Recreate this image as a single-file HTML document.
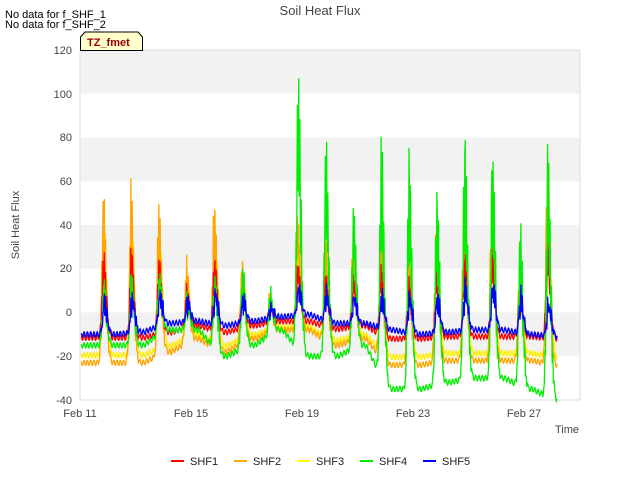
<!DOCTYPE html><html><head><style>body{margin:0;background:#fff;font-family:"Liberation Sans",sans-serif}</style></head><body>
<svg id="s" width="640" height="480" xmlns="http://www.w3.org/2000/svg" font-family="Liberation Sans, sans-serif">
<rect width="640" height="480" fill="#fff"/>
<rect x="80" y="50" width="500" height="350" fill="#fff"/>
<g fill="#f2f2f2"><rect x="80" y="50" width="500" height="43.75"/><rect x="80" y="137.5" width="500" height="43.75"/><rect x="80" y="225" width="500" height="43.75"/><rect x="80" y="312.5" width="500" height="43.75"/></g>
<g stroke="#ddd" stroke-width="1"><line x1="80" y1="50" x2="580" y2="50"/><line x1="80" y1="400" x2="580" y2="400"/><line x1="80" y1="50" x2="80" y2="400"/><line x1="580" y1="50" x2="580" y2="400"/></g>
<g id="d"></g>
<g font-size="11" fill="#444" text-anchor="end">
<text x="72" y="54">120</text><text x="72" y="98">100</text><text x="72" y="141">80</text><text x="72" y="185">60</text><text x="72" y="229">40</text><text x="72" y="272">20</text><text x="72" y="316">0</text><text x="72" y="360">-20</text><text x="72" y="404">-40</text></g>
<g font-size="11" fill="#444" text-anchor="middle">
<text x="80" y="417">Feb 11</text><text x="191" y="417">Feb 15</text><text x="302" y="417">Feb 19</text><text x="413" y="417">Feb 23</text><text x="524" y="417">Feb 27</text></g>
<text x="579" y="433" font-size="11" fill="#444" text-anchor="end">Time</text>
<text x="19" y="225" font-size="11" fill="#444" text-anchor="middle" transform="rotate(-90 19 225)">Soil Heat Flux</text>
<text x="320" y="15" font-size="13" fill="#444" text-anchor="middle">Soil Heat Flux</text>
<text x="5" y="18" font-size="11" fill="#000">No data for f_SHF_1</text>
<text x="5" y="28" font-size="11" fill="#000">No data for f_SHF_2</text>
<path d="M80.5 50.5 V37 L85 32 H138 L142.5 37 V50.5 Z" fill="#ffffcc" stroke="#000" stroke-width="1"/>
<text x="87" y="46" font-size="11" font-weight="bold" fill="#990000">TZ_fmet</text>
<g font-size="11" fill="#222">
<line x1="171" y1="461" x2="184" y2="461" stroke="#f00" stroke-width="2"/><text x="190" y="465">SHF1</text>
<line x1="234" y1="461" x2="247" y2="461" stroke="#fa0" stroke-width="2"/><text x="253" y="465">SHF2</text>
<line x1="297" y1="461" x2="310" y2="461" stroke="#ff0" stroke-width="2"/><text x="316" y="465">SHF3</text>
<line x1="360" y1="461" x2="373" y2="461" stroke="#0e0" stroke-width="2"/><text x="379" y="465">SHF4</text>
<line x1="423" y1="461" x2="436" y2="461" stroke="#00f" stroke-width="2"/><text x="442" y="465">SHF5</text></g>
</svg>
<script>
var P4=[15,18,20,8,20,23,11,113,79,50,83,79,63,88,80,42,78,0];
var N4=[-15,-15,-15,-8,-8,-20,-15,-8,-20,-20,-15,-35,-35,-32,-30,-30,-35,-40];
var P2=[56,59,53,25,56,27,10,47,35,35,45,35,45,60,65,25,70,0];
var N2=[-23,-23,-23,-18,-12,-18,-12,-8,-8,-15,-12,-24,-24,-22,-22,-22,-22,-24];
var P5=[8,10,11,7,12,8,3,13,11,9,10,11,10,15,16,10,7,0];
var N5=[-10,-10,-9,-5,-4,-6,-4,-2,-1,-5,-5,-8,-10,-9,-8,-8,-10,-11];
function ser(P,N,sc,shift){var pts=[];for(var t=0.05;t<17.2;t+=0.015){var d=Math.floor(t-0.3),p=t-0.3-d;if(d<0){d=0;p=0;}var pk=P[d]*sc,n0=N[d]*sc,n1=N[Math.min(d+1,17)]*sc;var base=n0+(n1-n0)*Math.min(1,p*1.3);var w=0.1;var q=p-0.55-shift;var sh=q<0?Math.exp(-Math.pow(q/0.08,2)):Math.exp(-Math.pow(q/0.14,2));var v=base+(pk-base)*sh*(0.75+0.25*Math.sin(t*131))+Math.sin(t*97)*sc*3*sh+Math.sin(t*53)*1.2;var x=80+t*27.75,y=312.5-v*2.1875;pts.push(x.toFixed(1)+","+y.toFixed(1));}return pts.join(" ");}
var g=document.getElementById("d"),h="";
function L(pts,c){h+='<polyline fill="none" stroke="'+c+'" stroke-width="1.3" points="'+pts+'"/>';}
L(ser(P2,N2,0.85,0.01),"#ffee00");
L(ser(P2,N2,1,-0.01),"#ffa500");
L(ser(P2,N2,0.5,0),"#ff0000");
L(ser(P4,N4,1,0.01),"#00ee00");
L(ser(P5,N5,1,0.03),"#0000ff");
g.innerHTML=h;
</script>
</body></html>
